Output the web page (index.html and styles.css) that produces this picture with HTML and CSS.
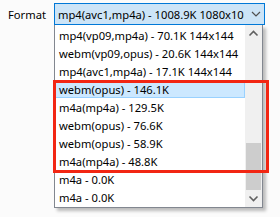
FILE: index.html
```html
<!DOCTYPE html>
<html lang="en">
<head>
   <meta charset="UTF-8">
   <title>Format</title>
   <link rel="stylesheet" href="styles.css">
</head>
<body>
   <div class="form-row">
      <label class="label">Format</label>
      <div class="combo">
         <span class="combo-text">mp4(avc1,mp4a) - 1008.9K 1080x1080</span>
         <svg class="chev" width="10" height="6" viewBox="0 0 10 6"><path d="M1 1l4 4 4-4" fill="none" stroke="#505050" stroke-width="1.2"/></svg>
      </div>
   </div>
   <div class="dropdown">
      <ul class="options">
         <li>mp4(vp09,mp4a) - 70.1K 144x144</li>
         <li>webm(vp09,opus) - 20.6K 144x144</li>
         <li>mp4(avc1,mp4a) - 17.1K 144x144</li>
         <li class="selected">webm(opus) - 146.1K</li>
         <li>m4a(mp4a) - 129.5K</li>
         <li>webm(opus) - 76.6K</li>
         <li>webm(opus) - 58.9K</li>
         <li>m4a(mp4a) - 48.8K</li>
         <li>m4a - 0.0K</li>
         <li>m4a - 0.0K</li>
      </ul>
      <div class="scrollbar">
         <svg class="arrow" width="17" height="17" viewBox="0 0 17 17"><path d="M4.5 10.5l4-4 4 4" fill="none" stroke="#606060" stroke-width="1.6"/></svg>
         <div class="track"><div class="thumb"></div></div>
         <svg class="arrow" width="17" height="17" viewBox="0 0 17 17"><path d="M4.5 6.5l4 4 4-4" fill="none" stroke="#606060" stroke-width="1.6"/></svg>
      </div>
      <div class="highlight-box"></div>
   </div>
</body>
</html>
```

FILE: styles.css
```css
* { box-sizing: border-box; }
body {
   margin: 0;
   width: 280px;
   height: 217px;
   overflow: hidden;
   background: #fbfbfb;
   font-family: 'Noto Sans', 'Open Sans', sans-serif;
   font-size: 11.2px;
   color: #000;
}
.form-row {
   display: flex;
   align-items: center;
   padding-top: 3px;
}
.label {
   width: 54px;
   padding-left: 8px;
}
.combo {
   width: 211px;
   height: 22px;
   display: flex;
   align-items: center;
   border: 1px solid #0078d7;
   background: #cce4f7;
   padding-left: 3px;
}
.combo-text {
   width: 186px;
   overflow: hidden;
   white-space: nowrap;
}
.chev { margin-left: 7px; }
.dropdown {
   position: relative;
   display: flex;
   width: 209px;
   height: 183px;
   margin-left: 54px;
   border: 1px solid #828790;
   border-top: none;
   background: #fff;
   box-shadow: 3px 3px 3px rgba(0,0,0,0.25);
}
.options {
   list-style: none;
   margin: 0;
   padding: 1px 0 0 0;
   flex: 1;
   overflow: hidden;
}
.options li {
   height: 18px;
   line-height: 17px;
   padding-left: 3px;
   white-space: nowrap;
   border: 1px solid transparent;
}
.options li.selected {
   background: #cce8ff;
   border-color: #99d1ff;
}
.scrollbar {
   width: 17px;
   display: flex;
   flex-direction: column;
   background: #f0f0f0;
}
.arrow { display: block; }
.track {
   flex: 1;
   display: flex;
   flex-direction: column;
   justify-content: flex-end;
   padding: 0 1px;
}
.thumb {
   height: 47px;
   background: #cdcdcd;
}
.highlight-box {
   position: absolute;
   left: -2px;
   top: 55px;
   width: 216px;
   height: 93px;
   border: 3px solid #f22613;
}
```
